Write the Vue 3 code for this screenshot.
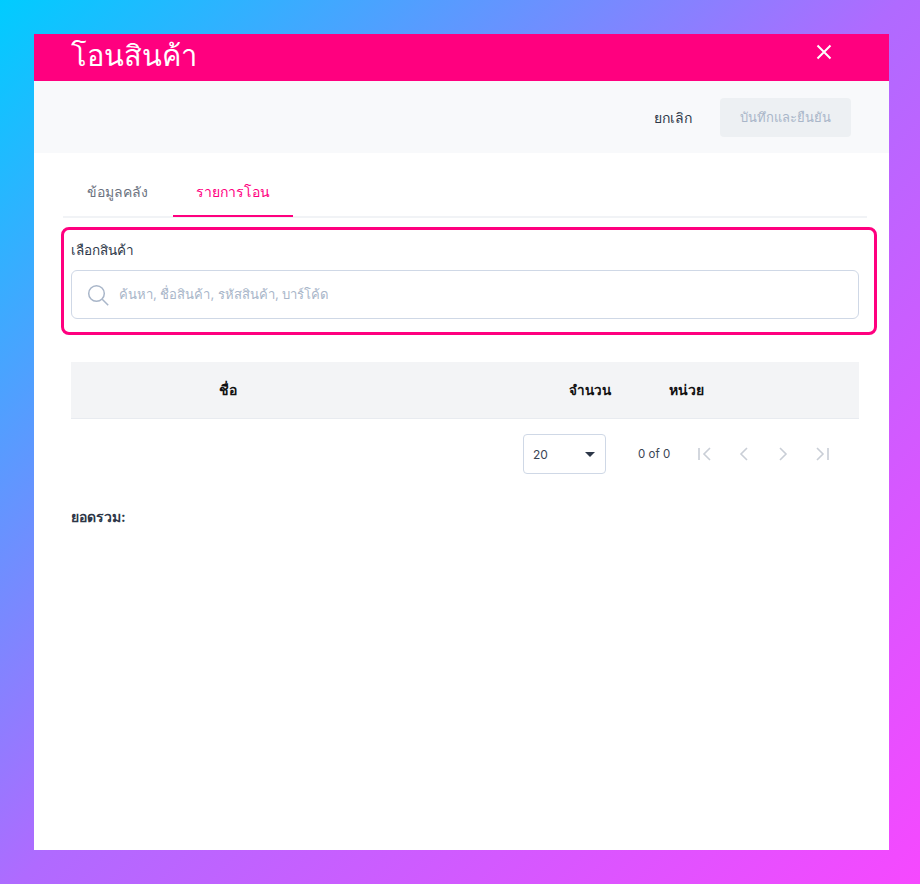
<template>
  <div class="page">
    <div class="modal">
      <header class="title-bar">
        <h1 class="title">โอนสินค้า</h1>
        <button class="close" aria-label="close">
          <svg width="16" height="16" viewBox="0 0 16 16" fill="none" stroke="#fff" stroke-width="2">
            <path d="M1.5 1.5l13 13M14.5 1.5l-13 13" />
          </svg>
        </button>
      </header>

      <div class="toolbar">
        <button class="btn-cancel">ยกเลิก</button>
        <button class="btn-save" disabled>บันทึกและยืนยัน</button>
      </div>

      <nav class="tabs">
        <div
          v-for="tab in tabs"
          :key="tab.label"
          class="tab"
          :class="{ active: tab.active }"
        >
          {{ tab.label }}
        </div>
      </nav>

      <section class="picker">
        <label class="picker-label">เลือกสินค้า</label>
        <div class="search">
          <svg width="22" height="22" viewBox="0 0 22 22" fill="none" stroke="#a9b6c9" stroke-width="1.5">
            <circle cx="9.5" cy="9.5" r="7.8" />
            <path d="M15.2 15.2l6 6" />
          </svg>
          <span class="placeholder">ค้นหา, ชื่อสินค้า, รหัสสินค้า, บาร์โค้ด</span>
        </div>
      </section>

      <div class="table-head">
        <div class="col-name">ชื่อ</div>
        <div class="col-qty">จำนวน</div>
        <div class="col-unit">หน่วย</div>
      </div>

      <div class="pager">
        <div class="page-size">
          <span>20</span>
          <i class="caret"></i>
        </div>
        <span class="range">0 of 0</span>
        <div class="pager-icons">
          <svg v-for="icon in pagerIcons" :key="icon" width="20" height="20" viewBox="0 0 20 20" fill="none" stroke="#c9ced6" stroke-width="1.6">
            <path :d="icon" />
          </svg>
        </div>
      </div>

      <div class="total">ยอดรวม:</div>
    </div>
  </div>
</template>

<script setup>
const tabs = [
  { label: 'ข้อมูลคลัง', active: false },
  { label: 'รายการโอน', active: true }
]

const pagerIcons = [
  'M4 4v12M15 4l-6 6 6 6',
  'M13 4l-6 6 6 6',
  'M7 4l6 6-6 6',
  'M5 4l6 6-6 6M16 4v12'
]
</script>

<style>
html,
body {
  margin: 0;
}
</style>

<style scoped>
* {
  box-sizing: border-box;
}

.page {
  width: 920px;
  height: 884px;
  padding: 34px 31px 34px 34px;
  background: linear-gradient(135deg, #00ccff 0%, #b06aff 50%, #f648ff 100%);
  font-family: Inter, "Noto Sans", "Liberation Sans", sans-serif;
}

.modal {
  height: 816px;
  background: #fff;
}

.title-bar {
  height: 47px;
  padding: 0 57px 0 37px;
  display: flex;
  justify-content: space-between;
  background: #ff007f;
  color: #fff;
}

.title {
  margin: 0;
  font-size: 29px;
  font-weight: 500;
  line-height: 44px;
}

.close {
  width: 16px;
  height: 16px;
  margin-top: 10px;
  padding: 0;
  border: 0;
  background: none;
}

.toolbar {
  height: 72px;
  padding: 1px 38px 0 0;
  display: flex;
  justify-content: flex-end;
  align-items: center;
  background: #f8f9fb;
}

.btn-cancel,
.btn-save {
  height: 39px;
  border: 0;
  border-radius: 4px;
  font: inherit;
  font-size: 14px;
  background: none;
}

.btn-cancel {
  margin-right: 28px;
  padding: 0;
  color: #2d3748;
}

.btn-save {
  width: 131px;
  padding: 0;
  font-size: 13px;
  background: #edf0f3;
  color: #a9b6c9;
}

.tabs {
  height: 65px;
  margin: 0 22px 0 29px;
  padding-top: 20px;
  display: flex;
  gap: 1px;
  border-bottom: 2px solid #f1f3f6;
}

.tab {
  height: 44px;
  padding: 0 24px;
  font-size: 14px;
  line-height: 38px;
  color: #6b7280;
}

.tab.active {
  padding: 0 23px;
  color: #ff007f;
  border-bottom: 2px solid #ff007f;
}

.picker {
  height: 108px;
  margin: 9px 12px 0 27px;
  padding: 8px 15px 0 7px;
  border: 3px solid #ff007f;
  border-radius: 8px;
}

.picker-label {
  display: block;
  height: 32px;
  font-size: 13.5px;
  line-height: 25px;
  color: #2d3748;
}

.search {
  height: 49px;
  padding: 0 15px;
  display: flex;
  align-items: center;
  gap: 10px;
  border: 1px solid #cfd8e6;
  border-radius: 6px;
}

.placeholder {
  font-size: 13.1px;
  color: #a9b6c9;
}

.table-head {
  height: 57px;
  margin: 27px 30px 0 37px;
  display: flex;
  align-items: center;
  background: #f3f4f6;
  border-bottom: 1px solid #e8ebf0;
  font-size: 14px;
  font-weight: 700;
  color: #111;
}

.col-name {
  width: 314px;
  text-align: center;
}

.col-qty {
  width: 226px;
  padding-left: 184px;
  white-space: nowrap;
  font-size: 13.5px;
}

.col-unit {
  margin-left: 58px;
}

.pager {
  height: 40px;
  margin: 15px 30px 0 37px;
  padding-left: 452px;
  display: flex;
  align-items: center;
}

.page-size {
  width: 83px;
  height: 40px;
  padding: 0 10px 0 9px;
  display: flex;
  align-items: center;
  justify-content: space-between;
  border: 1px solid #cfd8e6;
  border-radius: 4px;
  font-size: 12px;
  color: #3a4454;
}

.caret {
  width: 0;
  height: 0;
  border-left: 5px solid transparent;
  border-right: 5px solid transparent;
  border-top: 5px solid #2d3748;
}

.range {
  margin-left: 32px;
  font-size: 11.5px;
  color: #3a4454;
}

.pager-icons {
  margin-left: 25px;
  display: flex;
  gap: 19px;
}

.total {
  margin: 32px 0 0 37px;
  font-size: 14px;
  font-weight: 700;
  color: #2d3748;
}
</style>
